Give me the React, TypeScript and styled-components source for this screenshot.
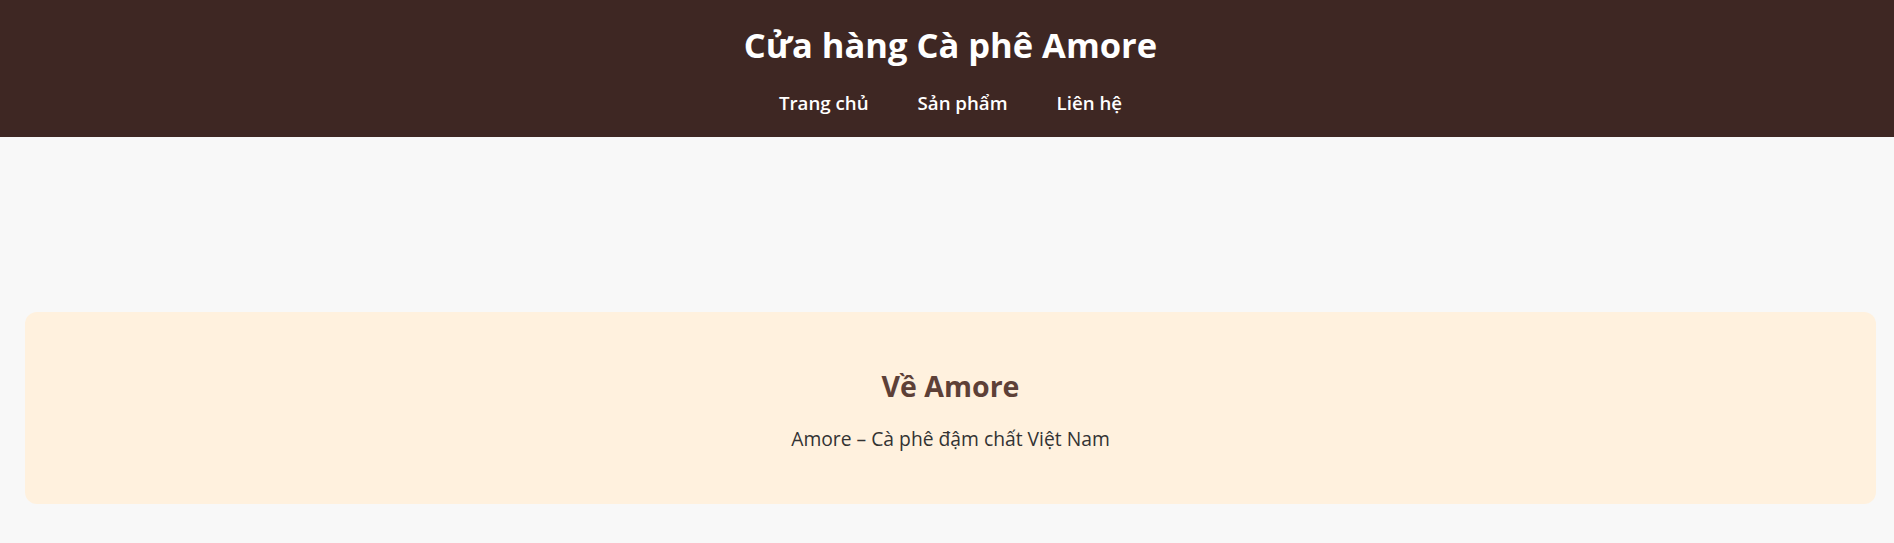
import React from "react";
import styled, { createGlobalStyle } from "styled-components";

const GlobalStyle = createGlobalStyle`
  html, body {
    margin: 0;
    padding: 0;
    background: #f8f8f8;
    font-family: "Open Sans", "Noto Sans", sans-serif;
  }
  * { box-sizing: border-box; }
`;

const Header = styled.header`
  background: #3e2723;
  color: #ffffff;
  padding: 22px 0 21px 7px;
  display: flex;
  flex-direction: column;
  align-items: center;
  gap: 22px;
`;

const Title = styled.h1`
  margin: 0;
  font-size: 34.5px;
  line-height: 46px;
  font-weight: 700;
`;

const Nav = styled.nav`
  display: flex;
  gap: 49px;
`;

const NavLink = styled.a`
  color: #ffffff;
  text-decoration: none;
  font-size: 18.7px;
  line-height: 26px;
  font-weight: 600;
`;

const Main = styled.main`
  padding: 175px 18px 39px 25px;
`;

const Card = styled.section`
  background: #fff1de;
  border-radius: 12px;
  padding: 56px 20px 52.4px;
  display: flex;
  flex-direction: column;
  align-items: center;
  gap: 21.5px;
`;

const CardTitle = styled.h2`
  margin: 0;
  color: #5d4037;
  font-size: 28.5px;
  line-height: 36px;
  font-weight: 700;
`;

const CardText = styled.p`
  margin: 0;
  color: #333333;
  font-size: 19.3px;
  line-height: 26px;
`;

export default function App() {
  return (
    <>
      <GlobalStyle />
      <Header>
        <Title>Cửa hàng Cà phê Amore</Title>
        <Nav>
          <NavLink href="#">Trang chủ</NavLink>
          <NavLink href="#">Sản phẩm</NavLink>
          <NavLink href="#">Liên hệ</NavLink>
        </Nav>
      </Header>
      <Main>
        <Card>
          <CardTitle>Về Amore</CardTitle>
          <CardText>Amore – Cà phê đậm chất Việt Nam</CardText>
        </Card>
      </Main>
    </>
  );
}
